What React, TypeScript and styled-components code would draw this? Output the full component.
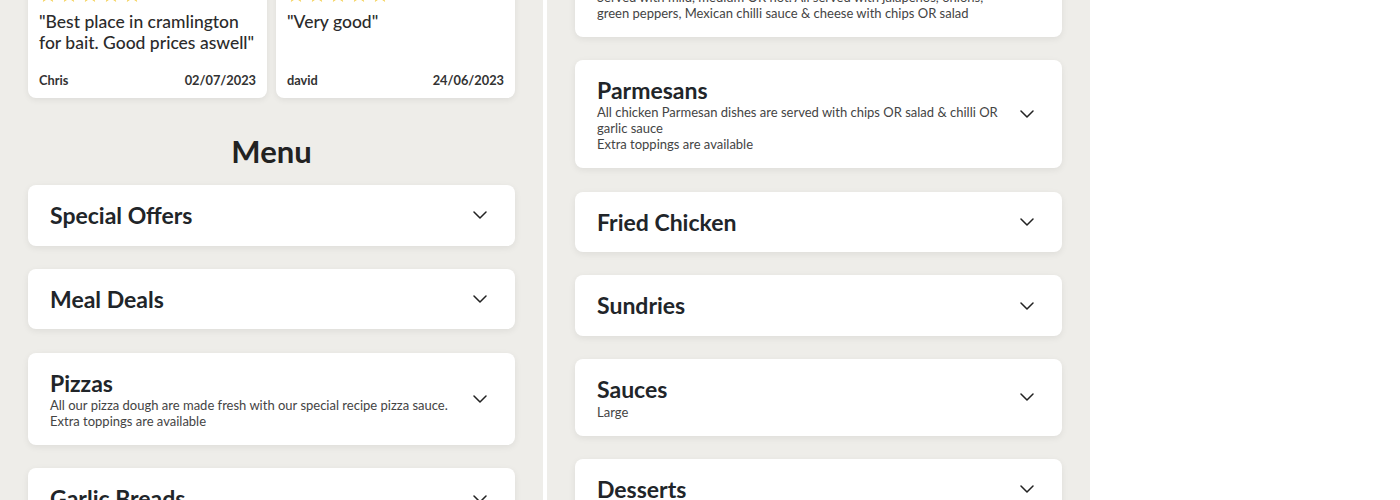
import React from "react";
import styled, { createGlobalStyle } from "styled-components";

const GlobalStyle = createGlobalStyle`
  html, body { margin: 0; padding: 0; background: #ffffff; }
  body { font-family: Lato, "Noto Sans", "Liberation Sans", sans-serif; color: #212529; }
  * { box-sizing: border-box; }
`;

const Page = styled.div`
  display: grid;
  grid-template-columns: 543px 543px;
  column-gap: 4px;
  width: 1090px;
  height: 500px;
  overflow: hidden;
`;

const Column = styled.section`
  background: #eeede9;
  padding: 0 28px;
  overflow: hidden;
`;

const ColumnInner = styled.div<{ $offset: number }>`
  margin-top: ${(p) => -p.$offset}px;
  display: flex;
  flex-direction: column;
`;

const ReviewRow = styled.div`
  display: grid;
  grid-template-columns: 1fr 1fr;
  column-gap: 9px;
`;

const ReviewCard = styled.article`
  background: #fff;
  border-radius: 8px;
  box-shadow: 0 2px 6px rgba(0, 0, 0, 0.07);
  padding: 11px 11px 10px;
  display: flex;
  flex-direction: column;
  height: 120px;
`;

const Stars = styled.div`
  display: flex;
  gap: 3px;
  height: 14px;
  align-items: flex-end;
`;

const Quote = styled.p`
  margin: 8px 0 0;
  font-size: 17.5px;
  line-height: 21px;
  font-weight: 500;
  color: #2b2b2b;
`;

const ReviewFooter = styled.div`
  margin-top: auto;
  display: flex;
  justify-content: space-between;
  font-size: 12.8px;
  line-height: 16px;
  font-weight: 700;
  color: #333;
`;

const MenuTitle = styled.h2`
  margin: 33px 0 14px;
  text-align: center;
  font-size: 31px;
  line-height: 40px;
  font-weight: 700;
  color: #222;
`;

const List = styled.div`
  display: flex;
  flex-direction: column;
  gap: 23.3px;
`;

const Card = styled.div`
  background: #fff;
  border-radius: 8px;
  box-shadow: 0 2px 7px rgba(0, 0, 0, 0.07);
  padding: 16px 28px 16px 22px;
  display: flex;
  align-items: center;
  gap: 16px;
`;

const CardBody = styled.div`
  flex: 1;
  min-width: 0;
`;

const CardTitle = styled.h3`
  margin: 0;
  font-size: 23px;
  line-height: 28.5px;
  font-weight: 700;
  color: #212529;
`;

const CardDesc = styled.p`
  margin: 0;
  font-size: 13px;
  line-height: 16px;
  color: #444;
`;

const ChevronBox = styled.span`
  flex: none;
  display: flex;
  width: 14px;
  height: 8px;
`;

const Star = () => (
  <svg width="18" height="17" viewBox="0 0 24 23">
    <path
      d="M12 0l3.1 7.6 8.2.6-6.3 5.3 2 8-7-4.4-7 4.4 2-8L.7 8.2l8.2-.6z"
      fill="#f5d25a"
    />
  </svg>
);

const Chevron = () => (
  <ChevronBox>
    <svg width="14" height="8" viewBox="0 0 14 8" fill="none">
      <path d="M1 1l6 6 6-6" stroke="#222" strokeWidth="1.5" strokeLinecap="round" strokeLinejoin="round" />
    </svg>
  </ChevronBox>
);

type Item = { title: string; desc?: string[] };

const MenuCard = ({ item }: { item: Item }) => (
  <Card>
    <CardBody>
      <CardTitle>{item.title}</CardTitle>
      {item.desc?.map((d, i) => (
        <CardDesc key={i}>{d}</CardDesc>
      ))}
    </CardBody>
    <Chevron />
  </Card>
);

const leftItems: Item[] = [
  { title: "Special Offers" },
  { title: "Meal Deals" },
  {
    title: "Pizzas",
    desc: [
      "All our pizza dough are made fresh with our special recipe pizza sauce.",
      "Extra toppings are available",
    ],
  },
  { title: "Garlic Breads" },
];

const rightItems: Item[] = [
  {
    title: "Kebabs",
    desc: [
      "Served with mild, medium OR hot. All served with jalapeños, onions, green peppers, Mexican chilli sauce & cheese with chips OR salad",
    ],
  },
  {
    title: "Parmesans",
    desc: [
      "All chicken Parmesan dishes are served with chips OR salad & chilli OR garlic sauce",
      "Extra toppings are available",
    ],
  },
  { title: "Fried Chicken" },
  { title: "Sundries" },
  { title: "Sauces", desc: ["Large"] },
  { title: "Desserts" },
];

const reviews = [
  { quote: '"Best place in cramlington for bait. Good prices aswell"', name: "Chris", date: "02/07/2023" },
  { quote: '"Very good"', name: "david", date: "24/06/2023" },
];

export default function App() {
  return (
    <>
      <GlobalStyle />
      <Page>
        <Column>
          <ColumnInner $offset={22}>
            <ReviewRow>
              {reviews.map((r) => (
                <ReviewCard key={r.name}>
                  <Stars>
                    {[0, 1, 2, 3, 4].map((i) => (
                      <Star key={i} />
                    ))}
                  </Stars>
                  <Quote>{r.quote}</Quote>
                  <ReviewFooter>
                    <span>{r.name}</span>
                    <span>{r.date}</span>
                  </ReviewFooter>
                </ReviewCard>
              ))}
            </ReviewRow>
            <MenuTitle>Menu</MenuTitle>
            <List>
              {leftItems.map((it) => (
                <MenuCard key={it.title} item={it} />
              ))}
            </List>
          </ColumnInner>
        </Column>
        <Column>
          <ColumnInner $offset={56}>
            <List>
              {rightItems.map((it) => (
                <MenuCard key={it.title} item={it} />
              ))}
            </List>
          </ColumnInner>
        </Column>
      </Page>
    </>
  );
}
